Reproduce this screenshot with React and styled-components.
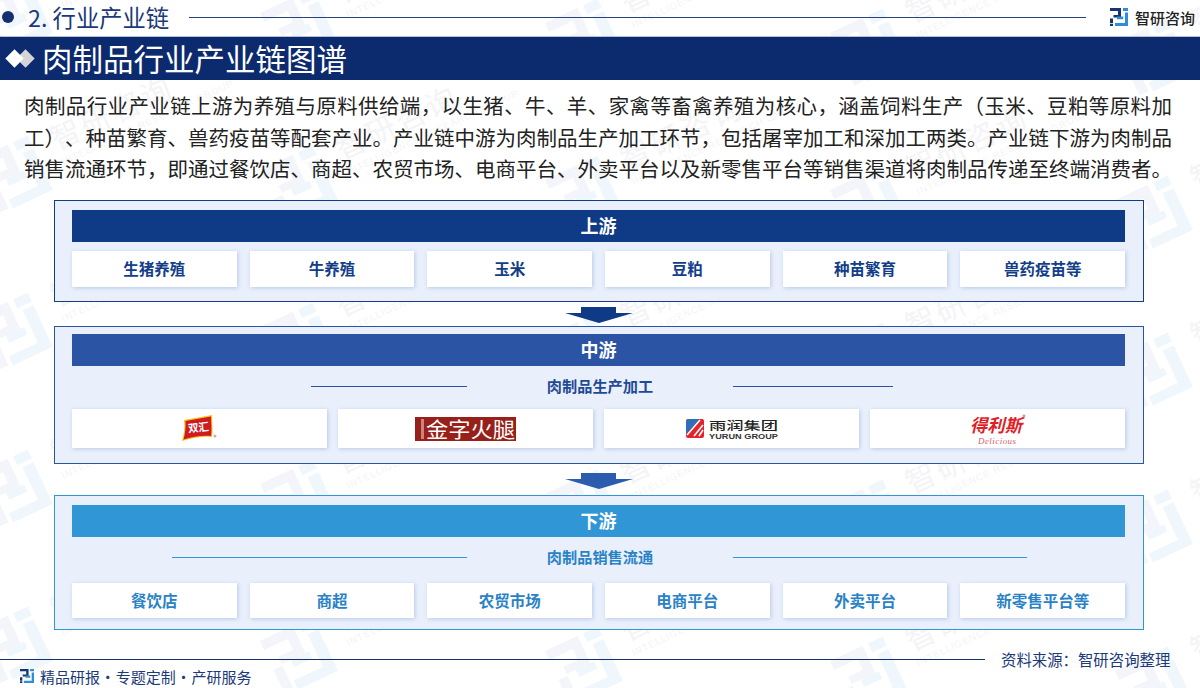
import { createGlobalStyle, styled } from "styled-components";

const FONT = '"Noto Sans CJK SC", "Noto Sans", sans-serif';
const upstream = ["生猪养殖", "牛养殖", "玉米", "豆粕", "种苗繁育", "兽药疫苗等"];
const downstream = ["餐饮店", "商超", "农贸市场", "电商平台", "外卖平台", "新零售平台等"];
const introLines = [
  "肉制品行业产业链上游为养殖与原料供给端，以生猪、牛、羊、家禽等畜禽养殖为核心，涵盖饲料生产（玉米、豆粕等原料加",
  "工）、种苗繁育、兽药疫苗等配套产业。产业链中游为肉制品生产加工环节，包括屠宰加工和深加工两类。产业链下游为肉制品",
  "销售流通环节，即通过餐饮店、商超、农贸市场、电商平台、外卖平台以及新零售平台等销售渠道将肉制品传递至终端消费者。",
];

const GlobalStyle = createGlobalStyle`
  html, body { margin: 0; padding: 0; background: #fff; }
  body { font-family: ${FONT}; }
`;

const Mark = ({ size = 18, dark = "#17356f", light = "#2f8fd6" }) => (
  <svg width={size} height={size} viewBox="0 0 18 18">
    <path fill={dark} d="M0 0H11V9.5H3.5V7H8V3H0Z" />
    <path fill={dark} d="M0 10.5H3V15H0ZM0 15.8H3V18H0Z" />
    <path fill={light} d="M13 0H18V3H13ZM15 4.5H18V18H5V15H15ZM7 8.5H13.2V11.2H7Z" />
  </svg>
);

const WatermarkLayer = () => {
  const items = [];
  for (let col = 0; col < 5; col++) {
    for (let row = -1; row < 5; row++) {
      const x = -25 + col * 285;
      const y = 631 + col * 10 - row * 157;
      items.push(
        <g key={col + "-" + row} transform={`translate(${x} ${y}) rotate(-25)`}>
          <path fill="#f3f5fa" d="M0 0H36V30H10V22H26V10H0Z" />
          <path fill="#f3f5fa" d="M0 32H10V58H0Z" />
          <path fill="#f0f7fc" d="M42 0H58V10H42ZM46 14H58V60H14V50H46ZM20 30H40V38H20Z" />
          <text x="78" y="26" fontSize="30" fill="#f4f4f6" fontFamily={FONT} letterSpacing="3">智研咨询</text>
          <text x="78" y="42" fontSize="9.5" fill="#f4f4f6" fontFamily="Liberation Sans, sans-serif" letterSpacing="1">INTELLIGENCE RESEARCH GROUP</text>
        </g>
      );
    }
  }
  return (
    <Watermark viewBox="0 0 1200 688">
      {items}
    </Watermark>
  );
};

const DownArrow = ({ color }) => (
  <svg width="68" height="16" viewBox="0 0 68 16">
    <path fill={color} d="M16 0H51V6H68L34 16L0 6H16Z" />
  </svg>
);

const ShuanghuiLogo = () => (
  <svg width="36" height="28" viewBox="0 0 36 28">
    <path fill="#f3c21c" d="M2 5L30 0C30 8 31 16 30 22C20 21 10 23 0 26C2 20 3 12 2 5Z" />
    <path fill="#cf1a22" d="M3.5 6L29 1.5C29 9 30 15 29 21C20 20 10 22 1.5 24.5C3 19 4 12 3.5 6Z" />
    <text x="6" y="16.5" fontSize="11" fontWeight="700" fill="#fff" fontFamily={FONT} textLength="21" lengthAdjust="spacingAndGlyphs" transform="rotate(-6 16 13)">双汇</text>
    <circle cx="33" cy="21" r="1.5" fill="#eda0a8" />
  </svg>
);

const JinziLogo = () => (
  <svg width="101" height="24" viewBox="0 0 101 24">
    <rect width="101" height="24" fill="#97201a" />
    <rect x="6" y="2" width="3" height="20" fill="#c9847d" />
    <text x="11" y="19.5" fontSize="21" fill="#fff" fontFamily={FONT} textLength="89" lengthAdjust="spacingAndGlyphs">金字火腿</text>
  </svg>
);

const YurunLogo = () => (
  <svg width="92" height="20" viewBox="0 0 92 20">
    <rect width="18" height="19" rx="2" fill="#e3242b" />
    <path fill="#2d6fb8" d="M2 0H14L0 15V2Z" />
    <path stroke="#fff" strokeWidth="1.6" d="M17 6L8 17M17 11L13 17M14 1L1 16" fill="none" />
    <text x="23" y="10.5" fontSize="11.5" fontWeight="500" fill="#222" fontFamily={FONT} textLength="69" lengthAdjust="spacingAndGlyphs">雨润集团</text>
    <text x="23" y="19.5" fontSize="7" fontWeight="700" fill="#333" fontFamily="Liberation Sans, sans-serif" textLength="69" lengthAdjust="spacingAndGlyphs">YURUN GROUP</text>
  </svg>
);

const DelisiLogo = () => (
  <svg width="58" height="32" viewBox="0 0 58 32">
    <text x="1" y="19" fontSize="18" fontWeight="700" fontStyle="italic" fill="#e01f2a" fontFamily={FONT} textLength="52" lengthAdjust="spacingAndGlyphs">得利斯</text>
    <text x="9" y="30.5" fontSize="9" fontStyle="italic" fill="#d9606a" fontFamily="Liberation Serif, serif" textLength="38">Delicious</text>
    <circle cx="55" cy="3" r="1.4" fill="#e58b92" />
  </svg>
);

const App = () => {
  return (
    <Page>
      <GlobalStyle />
      <WatermarkLayer />
      <TopBar>
        <Dot />
        <SectionTitle>2. 行业产业链</SectionTitle>
        <TopLine />
        <Brand>
          <Mark />
          <BrandName>智研咨询</BrandName>
        </Brand>
      </TopBar>
      <TitleBand>
        <Diamonds>
          <Diamond $color="#d5d5d5" $left={11} />
          <Diamond $color="#fff" $left={0} />
        </Diamonds>
        <BandText>肉制品行业产业链图谱</BandText>
      </TitleBand>
      <Intro>
        {introLines.map((line) => (
          <IntroLine key={line}>{line}</IntroLine>
        ))}
      </Intro>

      <Panel $color="#123d88" $pad={9}>
        <PanelHead $color="#0f3a85">上游</PanelHead>
        <CellRow $cols={6} $gap={13} $top={9} $height={36}>
          {upstream.map((name) => (
            <Cell key={name} $color="#123d88">{name}</Cell>
          ))}
        </CellRow>
        <PanelEnd $height={14} />
      </Panel>

      <ArrowSlot $height={24} $offset={5}>
        <DownArrow color="#0f3a85" />
      </ArrowSlot>

      <Panel $color="#2c54a4" $pad={7}>
        <PanelHead $color="#2c54a4">中游</PanelHead>
        <SubRow $color="#2c54a4" $height={40}>
          <SubLine $width={156} $side="end" />
          <SubLabel $color="#1f4a96">肉制品生产加工</SubLabel>
          <SubLine $width={160} $side="start" />
        </SubRow>
        <CellRow $cols={4} $gap={11} $top={3} $height={39}>
          <LogoCell><ShuanghuiLogo /></LogoCell>
          <LogoCell><JinziLogo /></LogoCell>
          <LogoCell><YurunLogo /></LogoCell>
          <LogoCell><DelisiLogo /></LogoCell>
        </CellRow>
        <PanelEnd $height={15} />
      </Panel>

      <ArrowSlot $height={31} $offset={9}>
        <DownArrow color="#2c5cae" />
      </ArrowSlot>

      <Panel $color="#3196d6" $pad={9}>
        <PanelHead $color="#3196d6">下游</PanelHead>
        <SubRow $color="#3196d6" $height={40}>
          <SubLine $width={295} $side="end" />
          <SubLabel $color="#2a82c6">肉制品销售流通</SubLabel>
          <SubLine $width={294} $side="start" />
        </SubRow>
        <CellRow $cols={6} $gap={13} $top={6} $height={35}>
          {downstream.map((name) => (
            <Cell key={name} $color="#2a82c6">{name}</Cell>
          ))}
        </CellRow>
        <PanelEnd $height={11} />
      </Panel>

      <SourceRow>
        <SourceLine />
        <SourceText>资料来源：智研咨询整理</SourceText>
      </SourceRow>
      <Slogan>
        <Mark size={14} />
        <SloganText>精品研报 · 专题定制 · 产研服务</SloganText>
      </Slogan>
    </Page>
  );
};

const Page = styled.div`
  position: relative;
  width: 1200px;
  height: 688px;
  overflow: hidden;
  background: #fff;
  display: flex;
  flex-direction: column;
`;

const Watermark = styled.svg`
  position: absolute;
  top: 0;
  left: 0;
  width: 1200px;
  height: 688px;
`;

const TopBar = styled.div`
  position: relative;
  height: 36px;
  display: flex;
  align-items: center;
  padding: 0 0 2px 2px;
  box-sizing: border-box;
  flex-shrink: 0;
`;

const Dot = styled.div`
  flex-shrink: 0;
  width: 12px;
  height: 12px;
  border-radius: 50%;
  background: #14306f;
`;

const SectionTitle = styled.div`
  flex-shrink: 0;
  margin-left: 14px;
  width: 161px;
  font-size: 23.3px;
  line-height: 34px;
  color: #1c3a78;
  white-space: nowrap;
`;

const TopLine = styled.div`
  flex-shrink: 0;
  width: 897px;
  height: 1px;
  background: #26437f;
  margin-right: 24px;
`;

const Brand = styled.div`
  flex-shrink: 0;
  display: flex;
  align-items: center;
  gap: 7px;
`;

const BrandName = styled.div`
  font-size: 15px;
  font-weight: 500;
  color: #222;
  white-space: nowrap;
`;

const TitleBand = styled.div`
  position: relative;
  flex-shrink: 0;
  height: 43px;
  margin-top: 1px;
  background: #0c2a6e;
  box-shadow: 0 -1px 0 #b4c0d8;
  display: flex;
  align-items: center;
`;

const Diamonds = styled.div`
  position: relative;
  flex-shrink: 0;
  width: 29px;
  height: 13px;
  margin-left: 8px;
`;

const Diamond = styled.div`
  position: absolute;
  top: 0;
  left: ${(p) => p.$left}px;
  width: 13px;
  height: 13px;
  background: ${(p) => p.$color};
  transform: rotate(45deg);
`;

const BandText = styled.div`
  margin-left: 5px;
  font-size: 30.5px;
  line-height: 43px;
  color: #fff;
  white-space: nowrap;
`;

const Intro = styled.div`
  position: relative;
  flex-shrink: 0;
  width: 1148px;
  margin: 10px 0 15.5px 24px;
  font-size: 20.5px;
  line-height: 31.5px;
  color: #222;
  text-spacing-trim: space-all;
  font-kerning: none;
`;

const IntroLine = styled.div`
  text-align: justify;
  text-align-last: justify;
  text-justify: inter-character;
`;

const Panel = styled.section`
  position: relative;
  flex-shrink: 0;
  margin-left: 54px;
  width: 1090px;
  box-sizing: border-box;
  padding: ${(p) => p.$pad}px 18px 0 17px;
  background: #e9f0fc;
  border: 1px solid ${(p) => p.$color};
`;

const PanelHead = styled.div`
  height: 32px;
  background: ${(p) => p.$color};
  color: #fff;
  font-size: 18px;
  font-weight: 700;
  line-height: 31px;
  text-align: center;
`;

const CellRow = styled.div`
  display: grid;
  grid-template-columns: repeat(${(p) => p.$cols}, 1fr);
  gap: ${(p) => p.$gap}px;
  margin-top: ${(p) => p.$top}px;
  height: ${(p) => p.$height}px;
`;

const LogoCell = styled.div`
  background: #fff;
  box-shadow: 1px 1px 4px rgba(60, 100, 180, 0.28);
  display: flex;
  align-items: center;
  justify-content: center;
`;

const Cell = styled(LogoCell)`
  box-sizing: border-box;
  padding-bottom: 2px;
  color: ${(p) => p.$color};
  font-size: 15.5px;
  font-weight: 700;
  white-space: nowrap;
`;

const PanelEnd = styled.div`
  height: ${(p) => p.$height}px;
`;

const SubRow = styled.div`
  display: grid;
  grid-template-columns: 395px 266px 1fr;
  align-items: center;
  height: ${(p) => p.$height}px;
  color: ${(p) => p.$color};
`;

const SubLine = styled.div`
  justify-self: ${(p) => p.$side};
  width: ${(p) => p.$width}px;
  height: 1px;
  background: currentColor;
`;

const SubLabel = styled.div`
  padding-bottom: 3px;
  color: ${(p) => p.$color};
  font-size: 15.2px;
  font-weight: 700;
  text-align: center;
`;

const ArrowSlot = styled.div`
  position: relative;
  flex-shrink: 0;
  height: ${(p) => p.$height}px;
  box-sizing: border-box;
  padding-top: ${(p) => p.$offset}px;
  display: flex;
  justify-content: center;
  width: 1198px;
  line-height: 0;
`;

const SourceRow = styled.div`
  position: relative;
  flex-shrink: 0;
  margin-top: 20px;
  height: 18px;
  display: flex;
  align-items: center;
`;

const SourceLine = styled.div`
  flex-shrink: 0;
  width: 985px;
  height: 1px;
  background: #14306f;
`;

const SourceText = styled.div`
  margin-left: 16px;
  font-size: 15.4px;
  color: #1c3a78;
  white-space: nowrap;
`;

const Slogan = styled.div`
  position: relative;
  flex-shrink: 0;
  padding-left: 20px;
  height: 16px;
  display: flex;
  align-items: center;
  gap: 6px;
`;

const SloganText = styled.div`
  font-size: 15px;
  word-spacing: -3px;
  color: #1c3a78;
  white-space: nowrap;
`;

export default App;
